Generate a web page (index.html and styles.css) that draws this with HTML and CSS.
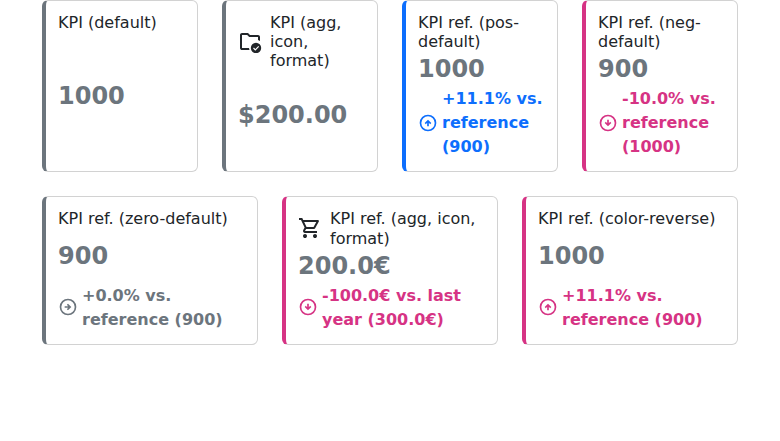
FILE: index.html
```html
<!DOCTYPE html>
<html lang="en">
<head>
<meta charset="utf-8">
<title>KPI cards</title>
<link rel="stylesheet" href="styles.css">
</head>
<body>
<svg class="defs" aria-hidden="true">
  <symbol id="arrow" viewBox="0 0 24 24">
    <circle cx="12" cy="12" r="9" fill="none" stroke="currentColor" stroke-width="2"/>
    <path fill="currentColor" d="M11 16h2v-4.2l1.6 1.6L16 12l-4-4-4 4 1.4 1.4 1.6-1.6z"/>
  </symbol>
</svg>
<main class="dashboard">
  <section class="row row-four">
    <article class="card neutral">
      <div class="title"><h2>KPI (default)</h2></div>
      <p class="value">1000</p>
      <div class="reference"></div>
    </article>
    <article class="card neutral">
      <div class="title">
        <svg class="icon" viewBox="0 0 24 24"><path fill="currentColor" d="M4 21q-.825 0-1.412-.587T2 19V6q0-.825.588-1.412T4 4h6l2 2h8q.825 0 1.413.588T22 8v4.1q-.45-.35-.95-.6t-1.05-.4V8h-8.825l-2-2H4v13h7.05q.05.525.163 1.025T11.55 21z"/><circle cx="18" cy="19" r="5.2" fill="currentColor"/><path d="m15.5 19 1.8 1.8 3.4-3.4" fill="none" stroke="#fff" stroke-width="1.2"/></svg>
        <h2>KPI (agg, icon, format)</h2>
      </div>
      <p class="value">$200.00</p>
      <div class="reference"></div>
    </article>
    <article class="card positive">
      <div class="title"><h2>KPI ref. (pos-default)</h2></div>
      <p class="value">1000</p>
      <div class="reference"><svg class="arrow"><use href="#arrow"/></svg><span>+11.1% vs. reference (900)</span></div>
    </article>
    <article class="card negative">
      <div class="title"><h2>KPI ref. (neg-default)</h2></div>
      <p class="value">900</p>
      <div class="reference"><svg class="arrow down"><use href="#arrow"/></svg><span>-10.0% vs. reference (1000)</span></div>
    </article>
  </section>
  <section class="row row-three">
    <article class="card neutral">
      <div class="title"><h2>KPI ref. (zero-default)</h2></div>
      <p class="value">900</p>
      <div class="reference"><svg class="arrow right"><use href="#arrow"/></svg><span>+0.0% vs. reference (900)</span></div>
    </article>
    <article class="card negative">
      <div class="title">
        <svg class="icon" viewBox="0 0 24 24"><path fill="currentColor" d="M7 22q-.825 0-1.412-.587T5 20t.588-1.412T7 18t1.413.588T9 20t-.587 1.413T7 22m10 0q-.825 0-1.412-.587T15 20t.588-1.412T17 18t1.413.588T19 20t-.587 1.413T17 22M6.15 6l2.4 5h7l2.75-5zM5.2 4h14.75q.575 0 .875.513t.025 1.037l-3.55 6.4q-.275.5-.737.775T15.55 13H8.1L7 15h12v2H7q-1.125 0-1.7-.987t-.05-1.963L6.6 11.6 3 4H1V2h3.25z"/></svg>
        <h2>KPI ref. (agg, icon, format)</h2>
      </div>
      <p class="value">200.0€</p>
      <div class="reference"><svg class="arrow down"><use href="#arrow"/></svg><span>-100.0€ vs. last year (300.0€)</span></div>
    </article>
    <article class="card negative">
      <div class="title"><h2>KPI ref. (color-reverse)</h2></div>
      <p class="value">1000</p>
      <div class="reference"><svg class="arrow"><use href="#arrow"/></svg><span>+11.1% vs. reference (900)</span></div>
    </article>
  </section>
</main>
</body>
</html>
```
FILE: styles.css
```css
* {
  box-sizing: border-box;
}

body {
  margin: 0;
  background: #fff;
  color: #212529;
  font: 16px/1.5 "DejaVu Sans", sans-serif;
}

.defs {
  display: none;
}

.dashboard {
  display: flex;
  flex-direction: column;
  gap: 24px;
  padding: 0 42px;
}

.row {
  display: grid;
  gap: 24px;
}

.row-four {
  grid-template-columns: repeat(4, minmax(0, 1fr));
}

.row-three {
  grid-template-columns: repeat(3, minmax(0, 1fr));
}

.card {
  display: flex;
  flex-direction: column;
  justify-content: space-between;
  padding: 12px;
  border: 1px solid #d2d2d2;
  border-left: 4px solid;
  border-radius: 6px;
}

.neutral {
  border-left-color: #6c757d;
}

.positive {
  border-left-color: #0d6efd;
}

.negative {
  border-left-color: #d63384;
}

.title {
  display: flex;
  align-items: center;
  gap: 8px;
}

.title h2 {
  margin: 0;
  font-size: 16px;
  font-weight: 400;
  line-height: 1.2;
}

.icon {
  flex: none;
  width: 24px;
  height: 24px;
  margin-bottom: 1px;
}

.value {
  margin: 0;
  color: #6c757d;
  font-size: 24px;
  font-weight: 700;
}

.reference {
  display: flex;
  align-items: center;
  gap: 4px;
  color: #6c757d;
  font-weight: 700;
}

.positive .reference {
  color: #0d6efd;
}

.negative .reference {
  color: #d63384;
}

.arrow {
  flex: none;
  width: 20px;
  height: 20px;
  margin-bottom: 1px;
}

.down {
  transform: rotate(180deg);
}

.right {
  transform: rotate(90deg);
}
```
